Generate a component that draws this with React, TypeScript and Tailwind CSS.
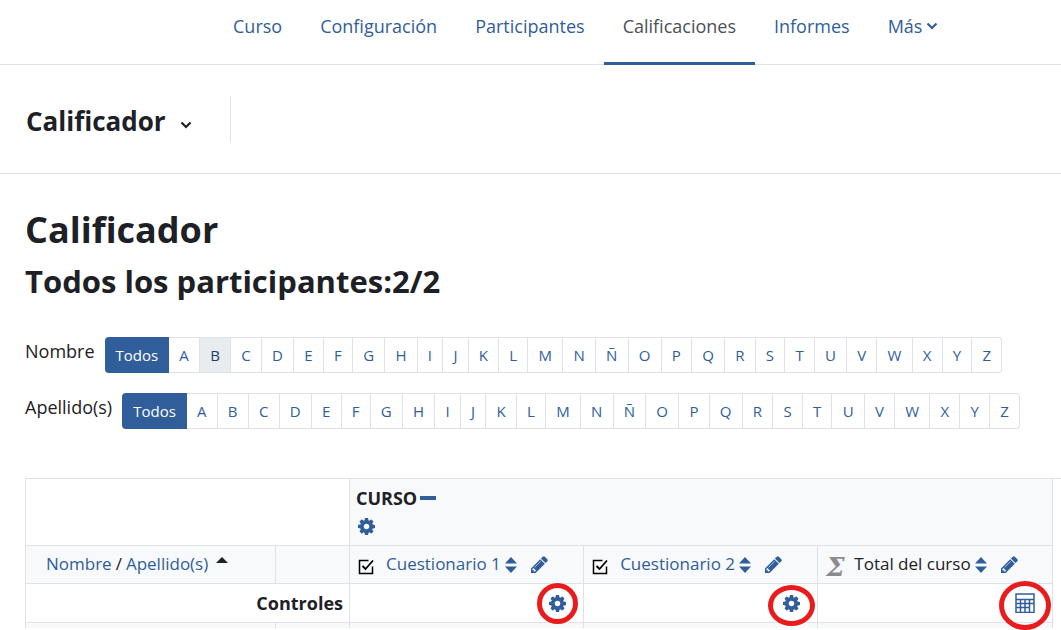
import type { ReactNode } from 'react';
import { clsx } from 'clsx';

const navItems = [
  { label: 'Curso', href: '#curso' },
  { label: 'Configuración', href: '#configuracion' },
  { label: 'Participantes', href: '#participantes' },
  { label: 'Calificaciones', href: '#calificaciones', active: true },
  { label: 'Informes', href: '#informes' },
];

const letters = 'ABCDEFGHIJKLMNÑOPQRSTUVWXYZ'.split('');

function ChevronIcon({ className }: { className?: string }) {
  return (
    <svg viewBox="0 0 12 8" className={className} fill="none" stroke="currentColor" strokeWidth="2.2" aria-hidden="true">
      <path d="M1.5 1.5 6 6l4.500-4.500" />
    </svg>
  );
}

function GearIcon() {
  return (
    <svg viewBox="128 128 1536 1536" className="size-[17px]" fill="currentColor" aria-hidden="true">
      <path d="M1152 896q0-106-75-181t-181-75-181 75-75 181 75 181 181 75 181-75 75-181zm512-109v222q0 12-8 23t-20 13l-185 28q-19 54-39 91 35 50 107 138 10 12 10 25t-9 23q-27 37-99 108t-94 71q-12 0-26-9l-138-108q-44 23-91 38-16 136-29 186-7 28-36 28h-222q-14 0-24.500-8.500t-11.500-21.500l-28-184q-49-16-90-37l-141 107q-10 9-25 9-14 0-25-11-126-114-165-168-7-10-7-23 0-12 8-23 15-21 51-66.500t54-70.500q-27-50-41-99l-183-27q-13-2-21-12.500t-8-23.500v-222q0-12 8-23t19-13l186-28q14-46 39-92-40-57-107-138-10-12-10-24 0-10 9-23 26-36 98.500-107.500t94.500-71.500q13 0 26 10l138 107q44-23 91-38 16-136 29-186 7-28 36-28h222q14 0 24.500 8.500t11.500 21.500l28 184q49 16 90 37l142-107q9-9 24-9 13 0 25 10 129 119 165 170 7 8 7 22 0 12-8 23-15 21-51 66.500t-54 70.500q26 50 41 98l183 28q13 2 21 12.500t8 23.500z" />
    </svg>
  );
}

function PencilIcon() {
  return (
    <svg viewBox="128 128 1536 1536" className="size-[17px]" fill="currentColor" aria-hidden="true">
      <path d="M491 1536l91-91-235-235-91 91v107h128v128h107zm523-928q0-22-22-22-10 0-17 7l-542 542q-7 7-7 17 0 22 22 22 10 0 17-7l542-542q7-7 7-17zm-54-192l416 416-832 832h-416v-416zm683 96q0 53-37 90l-166 166-416-416 166-165q36-38 90-38 53 0 91 38l235 234q37 39 37 91z" />
    </svg>
  );
}

function SortIcon() {
  return (
    <svg viewBox="0 0 12 16" className="h-4 w-3" fill="currentColor" aria-hidden="true">
      <path d="M6 0 12 6.500H0zM0 9.500h12L6 16z" />
    </svg>
  );
}

function QuizIcon() {
  return (
    <svg viewBox="0 0 16 16" className="mt-1 size-4 shrink-0 text-black" fill="none" stroke="currentColor" aria-hidden="true">
      <path d="M10.500 1.500H1.500V14.500H14.500V7.500" strokeWidth="1.500" />
      <path d="M4.500 7 7.500 10 15 1.500" strokeWidth="1.800" />
    </svg>
  );
}

function CalculatorIcon() {
  return (
    <svg viewBox="0 0 20 20" className="size-5" fill="none" stroke="currentColor" aria-hidden="true">
      <path d="M1 1H19V19.500H1z" strokeWidth="1.500" />
      <path d="M1 6.500H19M1 10.500H19M1 14.500H15M5.500 6V19M10 6V19M14.500 6V19" strokeWidth="1.500" />
    </svg>
  );
}

function InitialsBar({ label, hovered }: { label: string; hovered?: string }) {
  return (
    <div className="flex items-start gap-2.5">
      <span className="mt-0.5 text-lg leading-6">{label}</span>
      <nav aria-label={label} className="flex h-9 max-w-[898px] grow text-[15px]">
        <a href="#todos" aria-current="true" className="flex items-center rounded-l bg-[#2f5e9b] px-[11px] pt-0.5 text-white">Todos</a>
        {letters.map((letter) => (
          <a
            key={letter}
            href={`#${letter}`}
            className={clsx(
              'flex grow items-center justify-center border-y border-r border-[#dee2e6] px-2.5 pt-0.5 last:rounded-r',
              letter === hovered ? 'bg-[#e9ecef] text-[#1f3f68]' : 'text-[#2f5e9b]',
            )}
          >
            {letter}
          </a>
        ))}
      </nav>
    </div>
  );
}

function GradeHeading({ title, icon, linked }: { title: string; icon: ReactNode; linked?: boolean }) {
  return (
    <div className="flex items-center">
      <span className="flex w-7 items-center">{icon}</span>
      {linked ? <a href="#actividad" className="text-[#2f5e9b]">{title}</a> : <span>{title}</span>}
      <button type="button" aria-label={`Ordenar ${title}`} className="ml-1 text-[#2f5e9b]"><SortIcon /></button>
      <button type="button" aria-label={`Editar ${title}`} className="ml-3.5 text-[#2f5e9b]"><PencilIcon /></button>
    </div>
  );
}

export default function App() {
  return (
    <div className="bg-white font-['Open_Sans','Noto_Sans',sans-serif] text-lg text-[#1d2125]">
      {/* Course navigation */}
      <nav className="flex h-[65px] border-b border-[#dee2e6] pl-[214px] text-[#2f5e9b]">
        {navItems.map((item) => (
          <a
            key={item.label}
            href={item.href}
            className={clsx(
              'h-[65px] border-b-3 px-[19px] pt-3 leading-7',
              item.active ? 'border-[#2f5e9b] text-[#495057]' : 'border-transparent',
            )}
          >
            {item.label}
          </a>
        ))}
        <button type="button" className="flex h-[52px] items-center gap-1 px-[19px] leading-7">
          Más <ChevronIcon className="w-3" />
        </button>
      </nav>

      {/* Report selector */}
      <div className="flex h-[109px] items-center border-b border-[#dee2e6] px-[26px]">
        <button type="button" className="flex h-[46px] items-center gap-3.5 border-r border-[#dee2e6] pt-1 pr-[38px] text-[26px] font-bold">
          Calificador <ChevronIcon className="mt-2 w-3" />
        </button>
      </div>

      <main className="pb-0.5 pl-[25px]">
        <h1 className="pt-8 text-4xl leading-12 font-bold">Calificador</h1>
        <h2 className="mt-[3px] text-[31px] leading-12 font-bold">Todos los participantes:2/2</h2>

        <div className="mt-8 flex flex-col gap-5">
          <InitialsBar label="Nombre" hovered="B" />
          <InitialsBar label="Apellido(s)" />
        </div>

        {/* Grades */}
        <table className="mt-[49px] w-full table-fixed border-collapse text-[17px]">
          <colgroup>
            <col className="w-[250px]" />
            <col className="w-[74px]" />
            <col />
            <col />
            <col />
            <col className="w-[9px]" />
          </colgroup>
          <tbody>
            <tr className="h-[67px]">
              <td colSpan={2} className="border border-[#dee2e6]" />
              <th colSpan={3} className="border border-[#dee2e6] bg-[#f8f9fa] px-1.5 pt-[5px] text-left align-top text-lg leading-7 font-bold">
                <div className="flex items-center">
                  CURSO
                  <button type="button" aria-label="Contraer" className="ml-[3px] h-1 w-4 bg-[#2f5e9b]" />
                </div>
                <button type="button" aria-label="Acciones de CURSO" className="mt-1.5 ml-0.5 block text-[#2f5e9b]"><GearIcon /></button>
              </th>
              <td className="border-t border-[#dee2e6]" />
            </tr>
            <tr className="h-[38px]">
              <th className="border border-[#dee2e6] bg-[#f8f9fa] pl-5 text-left font-normal">
                <div className="flex items-center">
                  <a href="#nombre" className="text-[#2f5e9b]">Nombre</a>
                  <span className="px-1">/</span>
                  <a href="#apellidos" className="text-[#2f5e9b]">Apellido(s)</a>
                  <svg viewBox="0 0 12 6" className="mb-2.5 ml-2 w-3" aria-hidden="true"><path d="M6 0 12 6H0z" fill="currentColor" /></svg>
                </div>
              </th>
              <th className="border border-[#dee2e6] bg-[#f8f9fa]" />
              <th className="border border-[#dee2e6] bg-[#f8f9fa] px-2 font-normal"><GradeHeading title="Cuestionario 1" icon={<QuizIcon />} linked /></th>
              <th className="border border-[#dee2e6] bg-[#f8f9fa] px-2 font-normal"><GradeHeading title="Cuestionario 2" icon={<QuizIcon />} linked /></th>
              <th className="border border-[#dee2e6] bg-[#f8f9fa] px-2 font-normal">
                <GradeHeading
                  title="Total del curso"
                  icon={<span className="pt-1 font-['DejaVu_Serif',serif] text-[26px] leading-6 font-bold text-[#8c8c8c] italic">Σ</span>}
                />
              </th>
            </tr>
            <tr className="h-[39px]">
              <th colSpan={2} className="border border-[#dee2e6] px-1.5 text-right text-lg font-bold">Controles</th>
              <td className="border border-[#dee2e6] pr-[17px]">
                <button type="button" aria-label="Acciones de Cuestionario 1" className="relative ml-auto block text-[#2f5e9b]">
                  <GearIcon />
                  <span className="absolute -inset-3 rounded-[50%] border-5 border-[#e81c1c]" />
                </button>
              </td>
              <td className="border border-[#dee2e6] pr-[17px]">
                <button type="button" aria-label="Acciones de Cuestionario 2" className="relative ml-auto block text-[#2f5e9b]">
                  <GearIcon />
                  <span className="absolute -inset-x-[15px] -top-2.5 -bottom-3.5 rounded-[50%] border-5 border-[#e81c1c]" />
                </button>
              </td>
              <td className="border border-[#dee2e6] pr-[17px]">
                <button type="button" aria-label="Editar cálculo" className="relative ml-auto block text-[#2f5e9b]">
                  <CalculatorIcon />
                  <span className="absolute -inset-x-4 -top-3 -bottom-[17px] rounded-[50%] border-5 border-[#e81c1c]" />
                </button>
              </td>
            </tr>
            <tr className="h-[5px]">
              <td className="border border-b-0 border-[#dee2e6] bg-[#f8f9fa]" />
              <td className="border border-b-0 border-[#dee2e6] bg-[#f8f9fa]" />
              <td className="border border-b-0 border-[#dee2e6] bg-[#f8f9fa]" />
              <td className="border border-b-0 border-[#dee2e6] bg-[#f8f9fa]" />
              <td className="border border-b-0 border-[#dee2e6] bg-[#f8f9fa]" />
            </tr>
          </tbody>
        </table>
      </main>
    </div>
  );
}
